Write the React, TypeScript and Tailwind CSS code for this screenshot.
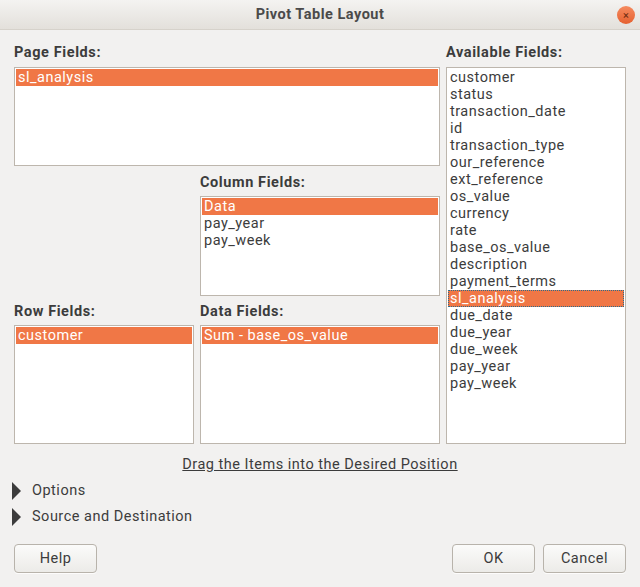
import { memo } from "react";

const FONT = { fontFamily: 'Roboto, "Open Sans", sans-serif' };

interface FieldListProps {
  items: string[];
  selected?: number;
  focused?: boolean;
  className?: string;
}

const FieldList = memo(function FieldList({ items, selected, focused, className }: FieldListProps) {
  return (
    <div className={`border border-[#bdb6ad] bg-white p-px ${className ?? ""}`}>
      {items.map((item, i) => {
        const isSel = i === selected;
        return (
          <div
            key={item}
            className={`h-[17px] whitespace-nowrap px-[2px] text-[14.5px] leading-[17px] tracking-[0.5px] ${
              isSel ? "bg-[#f07746] text-white" : "text-[#3c3c3c]"
            } ${isSel && focused ? "outline outline-1 -outline-offset-1 outline-dotted outline-[#2a6d8f]" : ""}`}
          >
            {item}
          </div>
        );
      })}
    </div>
  );
});

const Label = ({ children }: { children: string }) => (
  <div className="h-[20px] pt-px text-[14.5px] font-bold leading-[20px] tracking-[0.6px] text-[#3c3c3c]">
    {children}
  </div>
);

const Expander = ({ label }: { label: string }) => (
  <div className="flex h-[26px] items-center">
    <svg width="10" height="18" viewBox="0 0 10 18" className="ml-[12px]">
      <polygon points="0,0 9,9 0,18" fill="#3c3c3c" />
    </svg>
    <span className="ml-[10px] text-[14.5px] tracking-[0.5px] text-[#3c3c3c]">{label}</span>
  </div>
);

const Button = ({ children, className }: { children: string; className?: string }) => (
  <button
    type="button"
    className={`h-[29px] w-[83px] rounded-[4px] border border-[#b8b3ab] bg-gradient-to-b from-[#fbfbfa] to-[#ecebe8] text-[14.5px] tracking-[0.5px] text-[#3c3c3c] shadow-[0_1px_0_rgba(255,255,255,0.8)] ${className ?? ""}`}
  >
    {children}
  </button>
);

const AVAILABLE = [
  "customer",
  "status",
  "transaction_date",
  "id",
  "transaction_type",
  "our_reference",
  "ext_reference",
  "os_value",
  "currency",
  "rate",
  "base_os_value",
  "description",
  "payment_terms",
  "sl_analysis",
  "due_date",
  "due_year",
  "due_week",
  "pay_year",
  "pay_week",
];

export default function App() {
  return (
    <div className="h-[587px] w-[640px] overflow-hidden bg-[#f2f1f0]" style={FONT}>
      {/* title bar */}
      <div className="relative flex h-[30px] items-center justify-center border-b border-[#d6d2cb] bg-gradient-to-b from-[#f4f3f1] to-[#e3e0db]">
        <span className="pt-px text-[14.5px] font-bold tracking-[0.5px] text-[#4a4a4a]">Pivot Table Layout</span>
        <div className="absolute left-[617px] top-[6px] flex h-[18px] w-[18px] items-center justify-center rounded-full bg-gradient-to-b from-[#f58a5e] to-[#e5602f] text-[11px] leading-none text-[#6b2a10]">
          ×
        </div>
      </div>

      <div className="px-[14px] pt-[12px]">
        <div className="flex gap-[6px]">
          {/* left area */}
          <div className="flex w-[426px] flex-col">
            <Label>Page Fields:</Label>
            <FieldList items={["sl_analysis"]} selected={0} className="mt-[5px] h-[99px]" />
            <div className="mt-[6px] flex gap-[6px]">
              <div className="w-[180px]" />
              <div className="flex w-[240px] flex-col">
                <Label>Column Fields:</Label>
                <FieldList items={["Data", "pay_year", "pay_week"]} selected={0} className="mt-[4px] h-[100px]" />
              </div>
            </div>
            <div className="mt-[5px] flex gap-[6px]">
              <div className="flex w-[180px] flex-col">
                <Label>Row Fields:</Label>
                <FieldList items={["customer"]} selected={0} className="mt-[4px] h-[119px]" />
              </div>
              <div className="flex w-[240px] flex-col">
                <Label>Data Fields:</Label>
                <FieldList items={["Sum - base_os_value"]} selected={0} className="mt-[4px] h-[119px]" />
              </div>
            </div>
          </div>

          {/* right area */}
          <div className="flex w-[180px] flex-col">
            <Label>Available Fields:</Label>
            <FieldList items={AVAILABLE} selected={13} focused className="mt-[5px] h-[377px] pt-[1px]" />
          </div>
        </div>

        <div className="mt-[11px] flex h-[20px] justify-center">
          <span className="text-[14.5px] leading-[20px] tracking-[0.5px] text-[#3c3c3c] underline">
            Drag the Items into the Desired Position
          </span>
        </div>
      </div>

      <div className="mt-[3px]">
        <Expander label="Options" />
        <Expander label="Source and Destination" />
      </div>

      <div className="mt-[14px] flex px-[14px]">
        <Button>Help</Button>
        <div className="flex-1" />
        <Button>OK</Button>
        <Button className="ml-[8px]">Cancel</Button>
      </div>
    </div>
  );
}
